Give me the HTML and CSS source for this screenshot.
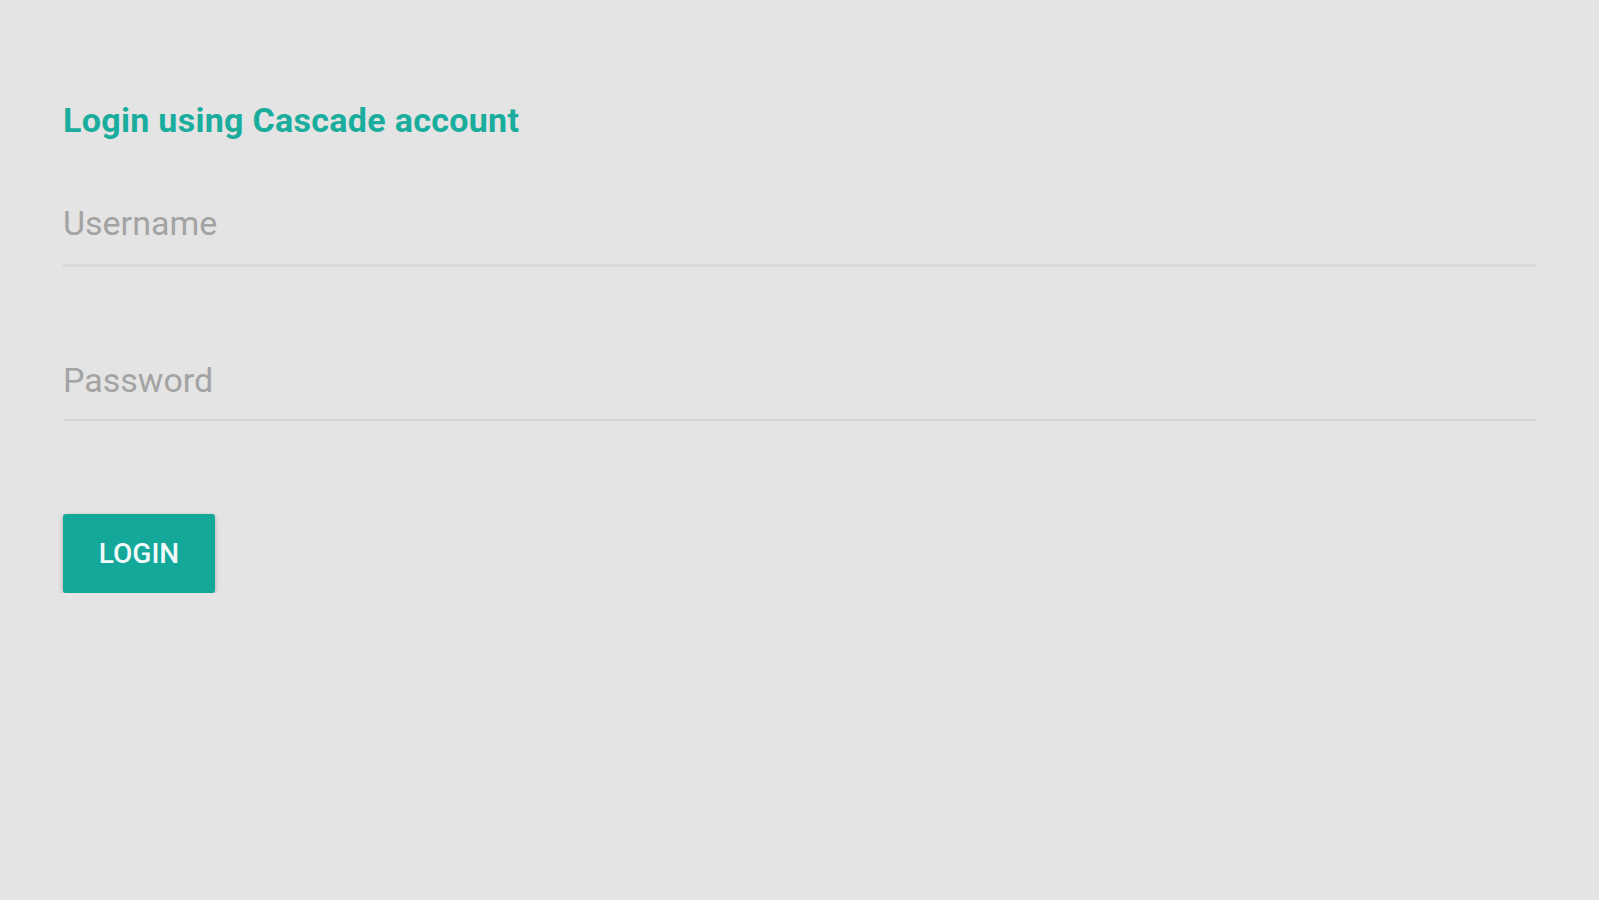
FILE: index.html
```html
<!DOCTYPE html>
<html lang="en">
  <head>
    <meta charset="UTF-8" />
    <meta name="viewport" content="width=device-width, initial-scale=1.0" />
    <title>Login</title>
    <link rel="stylesheet" href="styles.css">
  </head>
  <body>
    <div class="container">
      <h1 class="title">Login using Cascade account</h1>
      <form class="login-form">
        <div class="field">
          <input type="text" id="username" placeholder="Username" />
        </div>
        <div class="field field-password">
          <input type="password" id="password" placeholder="Password" />
        </div>
        <div class="buttons">
          <button type="button">Login</button>
        </div>
      </form>
    </div>
  </body>
</html>
```

FILE: styles.css
```css
body {
  margin: 0;
  padding: 0;
  font-family: Roboto, "Liberation Sans", sans-serif;
  background-color: #e4e4e4;
}
.container {
  padding: 97px 63px 0 63px;
}
.title {
  margin: 0;
  font-size: 34px;
  font-weight: 700;
  letter-spacing: 0.3px;
  color: #1aad9d;
  line-height: 46px;
}
.login-form {
  display: flex;
  flex-direction: column;
  margin-top: 60px;
}
.field input {
  display: block;
  width: 100%;
  box-sizing: border-box;
  background: transparent;
  border: none;
  border-bottom: 3px solid #d9d9d9;
  padding: 0 0 21px 0;
  font-family: Roboto, "Liberation Sans", sans-serif;
  font-size: 34px;
  line-height: 40px;
  color: #333;
  outline: none;
}
.field input::placeholder {
  color: #a3a3a3;
}
.field-password {
  margin-top: 93px;
}
.field-password input {
  padding-bottom: 19px;
  border-bottom: 2px solid #d6d6d6;
}
.buttons {
  margin-top: 93px;
}
button {
  background: #13a899;
  color: #f2fbfa;
  border: none;
  width: 152px;
  height: 79px;
  border-radius: 3px;
  font-family: Roboto, "Liberation Sans", sans-serif;
  font-size: 28px;
  font-weight: 500;
  text-transform: uppercase;
  box-shadow: 0 2px 5px rgba(0, 0, 0, 0.25);
  cursor: pointer;
}
```
